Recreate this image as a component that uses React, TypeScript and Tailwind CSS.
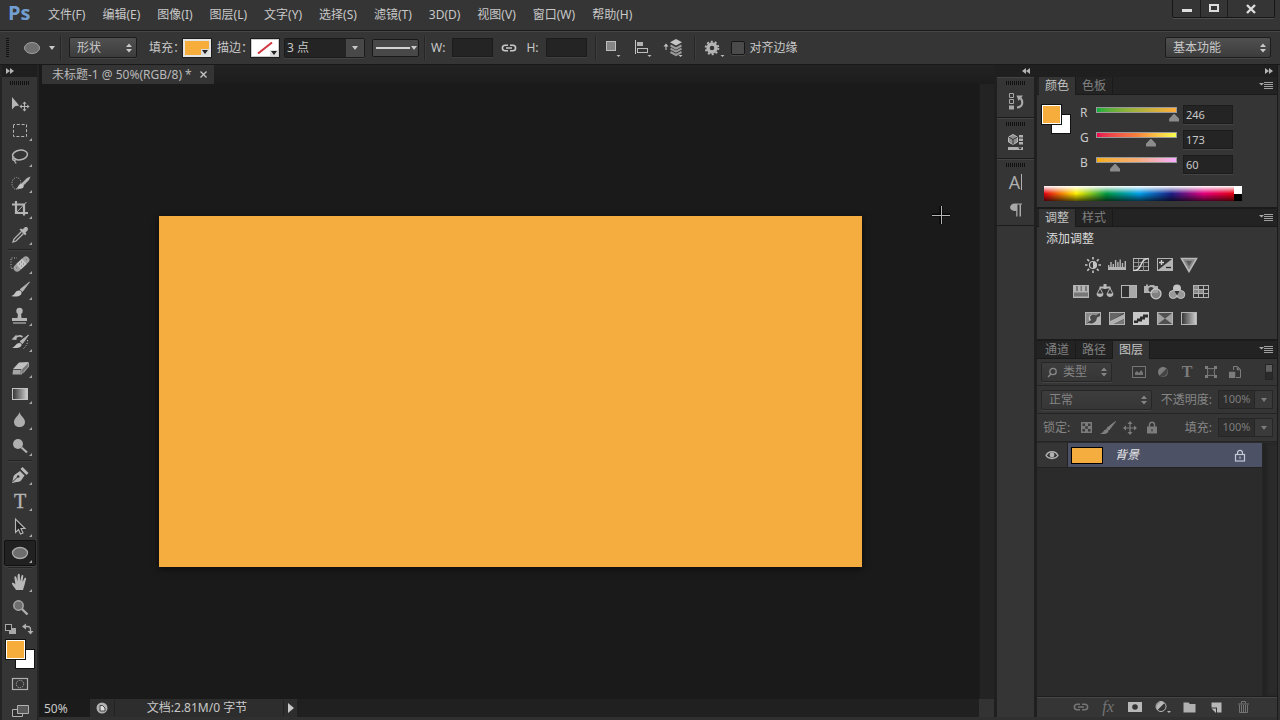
import React from "react";

type Kids = { children: React.ReactNode };

const menus = ["文件(F)", "编辑(E)", "图像(I)", "图层(L)", "文字(Y)", "选择(S)", "滤镜(T)", "3D(D)", "视图(V)", "窗口(W)", "帮助(H)"];

/* ---------- small shared pieces ---------- */

function Glyph({ w = 18, h = 18, children }: Kids & { w?: number; h?: number }) {
  return (
    <svg width={w} height={h} viewBox={`0 0 ${w} ${h}`} fill="none" aria-hidden="true" className="block shrink-0">
      {children}
    </svg>
  );
}

function UpDown() {
  return (
    <svg width="6" height="10" viewBox="0 0 6 10" aria-hidden="true" className="pointer-events-none absolute right-1 top-1/2 -translate-y-1/2">
      <path d="M0 4 3 0.5 6 4zM0 6 3 9.5 6 6z" fill="currentColor" />
    </svg>
  );
}

function DownTri() {
  return (
    <svg width="6" height="4" viewBox="0 0 6 4" aria-hidden="true">
      <path d="M0 0h6L3 4z" fill="currentColor" />
    </svg>
  );
}

function Select({ label, value, box, field }: { label: string; value: string; box: string; field: string }) {
  return (
    <div className={`relative rounded-[2px] border border-[#1c1c1c] bg-linear-to-b shadow-[0_1px_0_#454545] ${box}`}>
      <select aria-label={label} className={`h-full w-full appearance-none bg-transparent outline-none ${field}`}>
        <option>{value}</option>
      </select>
      <UpDown />
    </div>
  );
}

function Grip() {
  return <div className="h-1 w-5 bg-[repeating-linear-gradient(90deg,#111_0_1px,transparent_1px_2px)]" />;
}

function Double({ left = false }: { left?: boolean }) {
  return (
    <svg width="8" height="6" viewBox="0 0 8 6" aria-hidden="true" fill="#b4b4b4">
      {left ? <path d="M4 0v6L0 3zM8 0v6L4 3z" /> : <path d="M0 0v6l4-3zM4 0v6l4-3z" />}
    </svg>
  );
}

function Separator() {
  return <div className="h-6 w-px bg-[#262626] shadow-[1px_0_0_#3d3d3d]" />;
}

function LinkShape() {
  return (
    <Glyph w={16} h={10}>
      <path d="M7 2.2H4.2a2.8 2.8 0 0 0 0 5.6H7M9 2.2h2.8a2.8 2.8 0 0 1 0 5.6H9M5 5h6" stroke="currentColor" strokeWidth="1.6" />
    </Glyph>
  );
}

/* ---------- tool box ---------- */

function Tool({ name, more = true, active = false, children }: Kids & { name: string; more?: boolean; active?: boolean }) {
  return (
    <button
      type="button"
      aria-label={name}
      aria-pressed={active}
      className={active ? "h-[26px] w-8 rounded-[2px] border border-[#111] bg-[#212121] shadow-[0_1px_0_#444]" : "h-[26px] w-8 border border-transparent"}
    >
      <svg width="30" height="24" viewBox="3 1 30 24" fill="none" aria-hidden="true" className="block">
        {children}
        {more && <path d="M30 20v3h-3z" fill="#a8a8a8" />}
      </svg>
    </button>
  );
}

function ToolRule() {
  return <div className="my-px h-px w-6 bg-[#232323] shadow-[0_1px_0_#3e3e3e]" />;
}

function ToolBox() {
  return (
    <nav aria-label="工具" className="flex w-[39px] shrink-0 flex-col border-x-2 border-[#242424] bg-[#353535]">
      <div className="flex h-3 items-center bg-[#1f1f1f] pl-1">
        <Double />
      </div>
      <div className="flex h-[15px] justify-center pt-1">
        <Grip />
      </div>
      <div className="flex flex-col items-center">
        <Tool name="移动工具" more={false}>
          <path d="M10 5v12.500l3-3.300 4.200-.7z" fill="#b5b5b5" />
          <path d="M22.500 10v9M18 14.500h9" stroke="#b5b5b5" strokeWidth="1.200" />
          <path d="m22.500 9.400 2 2.400h-4zM22.500 19.600l2-2.400h-4zM17.400 14.500l2.400-2v4zM27.600 14.500l-2.400-2v4z" fill="#b5b5b5" />
        </Tool>
        <Tool name="矩形选框工具">
          <rect x="11.500" y="6.500" width="13" height="12" stroke="#b5b5b5" strokeDasharray="3 1.800" strokeDashoffset="1.500" />
        </Tool>
        <Tool name="套索工具">
          <ellipse cx="18" cy="11" rx="7.500" ry="4.800" stroke="#b5b5b5" strokeWidth="1.500" transform="rotate(-8 18 11)" />
          <path d="M12.500 13c-2.200.5-2.600 3-.6 3.400 1.500.2 2.200-1 1.600-2.100M12.500 16c0 1.800.4 2.600 1.800 3.300" stroke="#b5b5b5" strokeWidth="1.300" />
        </Tool>
        <Tool name="快速选择工具">
          <ellipse cx="14.500" cy="13.500" rx="4.500" ry="6" stroke="#b5b5b5" strokeDasharray="1 1.400" />
          <path d="m28.500 6.500-1.500 3.500-5.500 5.500-2-2 5.500-5.500z" fill="#b5b5b5" />
          <path d="M21.500 15c1 3-1.500 4.500-8 3.500 2-.5 2.500-2 3.500-3.500s3.500-2 4.500 0z" fill="#c4c4c4" />
        </Tool>
        <Tool name="裁剪工具">
          <path d="M10 8.500h12v11M14 5v12h12" stroke="#b5b5b5" strokeWidth="2.200" />
          <path d="m14 17 10.500-11" stroke="#b5b5b5" />
        </Tool>
        <Tool name="吸管工具">
          <path d="m19.500 9.500-7.500 7.500-1 3 3-1 7.500-7.500" stroke="#b5b5b5" strokeWidth="1.300" />
          <path d="m17.500 7.500 1.500-1 1.500 1 2-2c2.500-1.500 4.500 1 3 3l-2 2 1 1.500-1.500 1.300z" fill="#b5b5b5" />
        </Tool>
        <ToolRule />
        <Tool name="污点修复画笔工具">
          <path d="M13 17.500H9V7h6" stroke="#b5b5b5" strokeDasharray="1 1.500" />
          <rect x="10" y="9.500" width="19" height="7" rx="3.500" fill="#a2a2a2" transform="rotate(-43 19.500 13)" />
          <rect x="15.700" y="9.500" width="7.600" height="7" fill="#c6c6c6" transform="rotate(-43 19.500 13)" />
          <path d="M17 13h1M19 11h1M19 15h1M21 13h1M14 17h1M24 8.500h1" stroke="#6a6a6a" />
        </Tool>
        <Tool name="画笔工具">
          <path d="M27.500 5 20.500 14.500l-2.500-2z" fill="#b5b5b5" stroke="#b5b5b5" strokeWidth=".8" />
          <path d="M19.500 15c.5 3.800-3.500 5.500-10.500 4 2.500-.6 3.200-1.800 4.200-3.200 1.500-2.500 4.800-3 6.300-.8z" fill="#c4c4c4" />
        </Tool>
        <Tool name="仿制图章工具">
          <circle cx="17.500" cy="8" r="3.200" fill="#b5b5b5" />
          <path d="M16 10h3l.5 5H25v3H10v-3h5.500z" fill="#b5b5b5" />
          <path d="M11 20h13" stroke="#b5b5b5" strokeWidth="1.200" />
        </Tool>
        <Tool name="历史记录画笔工具">
          <path d="M26.500 6 20.500 14.500l-2.500-2z" fill="#b5b5b5" stroke="#b5b5b5" />
          <path d="M19.500 15c.5 3.200-3.500 4.700-9.500 3.700 2-.6 2.700-1.600 3.700-2.800 1.500-2 4.300-2.900 5.800-.9z" fill="#c4c4c4" />
          <path d="M12.500 9.500c3-3 6-3 8-1.500" stroke="#b5b5b5" strokeWidth="1.800" />
          <path d="M9.500 10.500 14.500 5.500v5.500z" fill="#b5b5b5" />
          <path d="M25.500 11c0 3.500-1 6-4 8.500" stroke="#b5b5b5" strokeDasharray="1.200 1.600" />
        </Tool>
        <Tool name="橡皮擦工具">
          <path d="m17 7.500 9.500-.5-5 7H11z" fill="#c0c0c0" />
          <path d="M26.500 7.500v4l-5 7v-4z" fill="#8a8a8a" />
          <path d="M11 14.800h7.500v4.700h-8z" fill="#a6a6a6" />
          <path d="m19 14.800 7.500-7v4l-7.500 7.700z" fill="#777" stroke="#bcbcbc" strokeWidth=".7" />
        </Tool>
        <Tool name="渐变工具">
          <defs>
            <linearGradient id="toolFade">
              <stop stopColor="#333" />
              <stop offset="1" stopColor="#d0d0d0" />
            </linearGradient>
          </defs>
          <rect x="10.500" y="7.500" width="15" height="11" fill="url(#toolFade)" stroke="#c4c4c4" />
        </Tool>
        <Tool name="模糊工具">
          <path d="M17.500 5c.5 3.500 5.500 6 5.500 10 0 3-2.300 5-5.500 5S12 18 12 15c0-4 5-6.500 5.500-10z" fill="#adadad" />
        </Tool>
        <Tool name="减淡工具">
          <circle cx="16" cy="11" r="5" fill="#b0b0b0" />
          <path d="m19.500 14.500 5.500 5" stroke="#b0b0b0" strokeWidth="2.200" />
        </Tool>
        <ToolRule />
        <Tool name="钢笔工具">
          <path d="M10 20.500c1.500-3 .5-6 3-8l5-3.500 4.500 4.500-3.200 4.700c-2 2.300-5 1.300-8.300 2.800z" fill="#b8b8b8" />
          <path d="m10.500 20 5.500-5.500" stroke="#333" />
          <circle cx="16.200" cy="14.500" r="1.300" fill="#333" />
          <path d="m19.500 6 6 6" stroke="#b8b8b8" strokeWidth="3" />
        </Tool>
        <Tool name="横排文字工具">
          <text x="18" y="19.500" textAnchor="middle" fontSize="20" className="fill-[#b5b5b5] font-['Liberation_Serif',serif]" stroke="#b5b5b5" strokeWidth=".4">T</text>
        </Tool>
        <Tool name="路径选择工具">
          <path d="M13.500 5v13.500l3-3 2 4.500 2.500-1-2-4.500h4z" fill="#242424" stroke="#b8b8b8" strokeWidth="1.100" />
        </Tool>
        <Tool name="椭圆工具" active>
          <ellipse cx="18" cy="13" rx="7.500" ry="5.500" fill="#6d6d6d" stroke="#a8a8a8" strokeWidth="1.300" />
        </Tool>
        <ToolRule />
        <Tool name="抓手工具">
          <path d="M14 21c-.6-2-3.800-4.600-4.200-6.800 1.200-1.200 2.700 0 3.600 1.300L12.300 8c.5-1.200 1.800-.9 2.100.2l1 4.300.3-6.800c.5-1.200 1.900-1 2.100 0l.3 6.700 1.300-5.700c.7-1 1.900-.6 1.900.4l-.8 5.800 1.900-3.700c.9-.8 2-.1 1.700.9-1 3.200-1.400 6.300-2.300 8.200L21 21z" fill="#b8b8b8" />
        </Tool>
        <Tool name="缩放工具" more={false}>
          <circle cx="16.500" cy="10.500" r="4.700" fill="#6f6f6f" stroke="#a8a8a8" strokeWidth="1.500" />
          <path d="m20 14 5.500 5.500" stroke="#adadad" strokeWidth="2.400" />
        </Tool>
      </div>
      <div className="flex h-[15px] items-center justify-between pl-[3px] pr-[3px]">
        <button type="button" aria-label="默认前景色和背景色">
          <Glyph w={12} h={12}>
            <path d="M6 5h5v6H4V8" fill="#a8a8a8" />
            <rect x=".5" y="1.500" width="6" height="6" fill="#2a2a2a" stroke="#a8a8a8" />
          </Glyph>
        </button>
        <button type="button" aria-label="切换前景色和背景色">
          <Glyph w={12} h={12}>
            <path d="M3 3.500h2.500c2 0 3 1 3 3V9" stroke="#b0b0b0" strokeWidth="1.300" />
            <path d="M4 .5v6l-4-3zM5.500 8h6l-3 3.500z" fill="#b0b0b0" />
          </Glyph>
        </button>
      </div>
      <div className="pl-1 pt-1">
        <Swatches />
      </div>
      <div className="flex flex-1 flex-col items-center justify-between pb-[2px] pt-[8px]">
        <button type="button" aria-label="以快速蒙版模式编辑">
          <Glyph w={18} h={14}>
            <rect x="1.500" y="1.500" width="15" height="11" stroke="#b0b0b0" strokeWidth="1.200" />
            <circle cx="9" cy="7" r="3.700" stroke="#b0b0b0" strokeDasharray="1.300 1" />
          </Glyph>
        </button>
        <button type="button" aria-label="更改屏幕模式">
          <Glyph w={18} h={14}>
            <path d="M1.500 5.500h10v7h-10z" stroke="#b0b0b0" fill="#303030" />
            <path d="M6.500 1.500h11v8h-11z" stroke="#b0b0b0" fill="#585858" />
          </Glyph>
        </button>
      </div>
    </nav>
  );
}

function Swatches() {
  return (
    <div className="relative h-[29px] w-[29px]">
      <button type="button" aria-label="背景色" className="absolute bottom-0 right-0 h-5 w-5 border border-[#111] bg-white" />
      <button type="button" aria-label="前景色" className="absolute left-0 top-0 h-[19px] w-[19px] border border-white bg-[#f6ad3c] outline outline-[#111]" />
    </div>
  );
}

/* ---------- top bars ---------- */

function MenuBar() {
  return (
    <header className="flex h-[30px] shrink-0 items-start bg-[#353535]">
      <div className="flex h-full w-10 items-center pl-2 pb-1 font-['Open_Sans',sans-serif] text-xl font-bold leading-none text-[#729fd0]">Ps</div>
      <nav aria-label="主菜单" className="flex h-full items-center gap-[17px]">
        {menus.map((m) => (
          <button type="button" key={m} className="whitespace-nowrap first:ml-2">{m}</button>
        ))}
      </nav>
      <div className="ml-auto mr-[5px] flex h-[18px] rounded-b-[2px] border border-t-0 border-[#161616] text-[#ddd] shadow-[0_1px_0_#4a4f49]">
        <button type="button" aria-label="最小化" className="flex w-7 items-center justify-center border-r border-[#1b1b1b]">
          <span className="mt-1 h-[3px] w-[10px] bg-current" />
        </button>
        <button type="button" aria-label="最大化" className="flex w-[27px] items-center justify-center border-r border-[#1b1b1b]">
          <span className="mb-px h-2 w-[10px] border-2 border-current" />
        </button>
        <button type="button" aria-label="关闭" className="flex w-[46px] items-center justify-center">
          <Glyph w={10} h={10}>
            <path d="m1 1 8 8M9 1 1 9" stroke="currentColor" strokeWidth="2.400" />
          </Glyph>
        </button>
      </div>
    </header>
  );
}

function OptionsBar() {
  return (
    <div className="flex h-[35px] shrink-0 items-center border-y border-[#191919] bg-[#353535] pl-[6px] pr-[9px] shadow-[inset_0_1px_0_#464646] [&_label]:whitespace-nowrap">
      <div className="h-5 w-[3px] bg-[repeating-linear-gradient(180deg,#111_0_1px,transparent_1px_2px)]" />
      <button type="button" aria-label="工具预设" className="ml-[14px] flex items-center gap-2">
        <Glyph w={18} h={14}>
          <ellipse cx="9" cy="7" rx="7.500" ry="5.500" fill="#707070" stroke="#a0a0a0" />
        </Glyph>
        <DownTri />
      </button>
      <div className="ml-[5px] mr-2">
        <Separator />
      </div>
      <Select label="工具模式" value="形状" box="h-[21px] w-[68px] from-[#505050] to-[#3c3c3c]" field="pl-[7px]" />
      <span className="ml-3">填充：</span>
      <button type="button" aria-label="填充颜色" className="-ml-[2px] flex h-[18px] w-7 items-end justify-end border-2 border-[#e4e4e4] bg-[#f6ad3c] outline outline-[#1d1d1d]">
        <span className="bg-[#ddd] p-px text-[#222]"><DownTri /></span>
      </button>
      <span className="ml-[6px]">描边：</span>
      <button type="button" aria-label="描边颜色" className="relative -ml-[2px] flex h-[18px] w-7 items-end justify-end border border-[#ccc] bg-white outline outline-[#1d1d1d]">
        <svg width="16" height="12" viewBox="0 0 16 12" aria-hidden="true" className="absolute left-[5px] top-[2px]">
          <path d="M1 11.500 15 .5" stroke="#d23540" strokeWidth="2" />
        </svg>
        <span className="relative bg-[#ddd] p-px text-[#222]"><DownTri /></span>
      </button>
      <div className="ml-[5px] flex h-5 rounded-[2px] border border-[#1b1b1b] bg-[#242424] shadow-[0_1px_0_#434343]">
        <input aria-label="描边宽度" defaultValue="3 点" className="w-[61px] bg-transparent pl-[2px] outline-none" />
        <button type="button" aria-label="描边宽度选项" className="flex w-[18px] items-center justify-center bg-[#484848]"><DownTri /></button>
      </div>
      <button type="button" aria-label="描边类型" className="ml-[7px] flex h-[18px] w-[47px] items-center justify-between rounded-[2px] border border-[#191919] bg-[#484848] pl-[3px] pr-px">
        <span className="h-[2px] w-[34px] bg-[#d2d2d2]" />
        <DownTri />
      </button>
      <div className="ml-[5px] mr-[6px]"><Separator /></div>
      <label htmlFor="shape-w">W:</label>
      <input id="shape-w" className="ml-[7px] h-[19px] w-[41px] border border-[#1c1c1c] bg-[#242424] shadow-[0_1px_0_#404040] outline-none" />
      <button type="button" aria-label="链接形状的宽度和高度" className="mx-2"><LinkShape /></button>
      <label htmlFor="shape-h" className="ml-px">H:</label>
      <input id="shape-h" className="ml-[7px] h-[19px] w-[41px] border border-[#1c1c1c] bg-[#242424] shadow-[0_1px_0_#404040] outline-none" />
      <div className="ml-2 mr-[9px]"><Separator /></div>
      <button type="button" aria-label="路径操作">
        <Glyph w={20} h={20}>
          <rect x="1.500" y="3.500" width="9" height="9" fill="#858585" stroke="#bdbdbd" />
          <path d="M11.500 17h4l-2 2z" fill="#bbb" />
        </Glyph>
      </button>
      <button type="button" aria-label="路径对齐方式" className="ml-[9px]">
        <Glyph w={20} h={20}>
          <path d="M1.500 2v14" stroke="#c4c4c4" />
          <rect x="3" y="4" width="6" height="4" fill="#b0b0b0" />
          <rect x="3.500" y="10.500" width="10" height="4" stroke="#bdbdbd" />
          <path d="M13.500 17h4l-2 2z" fill="#bbb" />
        </Glyph>
      </button>
      <button type="button" aria-label="路径排列方式" className="ml-[9px]">
        <Glyph w={20} h={20}>
          <path d="m13 1 6 3.200-6 3.200-6-3.200z" fill="#c4c4c4" />
          <path d="m7.500 7.500 5.500 3 5.500-3M7.500 10.700l5.500 3 5.500-3M7.500 14l5.500 3 5.500-3" stroke="#999" strokeWidth="2" />
          <path d="M3 12V7" stroke="#c4c4c4" />
          <path d="m.5 8.500 2.500-3 2.500 3zM15.500 17h4l-2 2z" fill="#c4c4c4" />
        </Glyph>
      </button>
      <div className="ml-[11px] mr-[9px]"><Separator /></div>
      <button type="button" aria-label="几何选项">
        <Glyph w={22} h={20}>
          <circle cx="8" cy="10" r="4" stroke="#b4b4b4" strokeWidth="3.400" />
          <circle cx="8" cy="10" r="6.300" stroke="#b4b4b4" strokeWidth="2" strokeDasharray="2 1.958" />
          <path d="M16.500 17h4l-2 2z" fill="#bbb" />
        </Glyph>
      </button>
      <input id="align-edges" type="checkbox" className="ml-[5px] h-[14px] w-[14px] appearance-none rounded-[2px] border border-[#171717] bg-[#4b4b4b] shadow-[0_1px_0_#484848]" />
      <label htmlFor="align-edges" className="ml-[5px]">对齐边缘</label>
      <div className="ml-auto">
        <Select label="工作区" value="基本功能" box="h-[21px] w-[106px] from-[#505050] to-[#3c3c3c]" field="pl-[7px]" />
      </div>
    </div>
  );
}

/* ---------- document ---------- */

function DocumentWindow() {
  return (
    <main className="flex min-w-0 flex-1 flex-col bg-[#1a1a1a] pl-[3px]">
      <div role="tablist" className="flex h-[19px] shrink-0 bg-linear-to-b from-[#232323] to-[#1c1c1c]">
        <div role="tab" aria-selected="true" className="flex items-center gap-2 bg-[#343434] pl-[10px] pr-[7px] text-[#b9b9b9]">
          <span className="whitespace-pre">未标题-1 @ 50%(RGB/8) *</span>
          <button type="button" aria-label="关闭文档">
            <Glyph w={7} h={7}>
              <path d="m.5.5 6 6M6.500.5l-6 6" stroke="#c8c8c8" strokeWidth="1.300" />
            </Glyph>
          </button>
        </div>
      </div>
      <div className="flex min-h-0 flex-1">
        <div className="relative flex flex-1 items-center justify-center bg-[#1a1a1a]">
          <div className="h-[57%] w-3/4 bg-[#f6ad3f] shadow-[0_2px_6px_#0c0c0c]" />
          <svg width="18" height="18" viewBox="0 0 18 18" aria-hidden="true" className="absolute right-[29px] top-[122px]">
            <path d="M9 0v18M0 9h18" stroke="#050505" strokeWidth="3" />
            <path d="M9.500 0v18M0 9.500h18" stroke="#b5b5b5" />
          </svg>
        </div>
        <div className="w-[15px] border-l border-[#1d1d1d] bg-[#232323]" />
      </div>
      <footer className="flex h-[18px] shrink-0 items-center bg-[#202020]">
        <input aria-label="缩放比例" defaultValue="50%" className="h-full w-12 bg-[#1b1b1b] pl-[2px] outline-none" />
        <div className="flex h-full items-center bg-[#2d2d2d]">
          <button type="button" aria-label="文档状态" className="flex w-6 justify-center">
            <Glyph w={12} h={12}>
              <circle cx="6" cy="6" r="5.500" fill="#b0b0b0" />
              <path d="M4 3.500h2.500l2.500 2.500v3H4z" fill="#ddd" stroke="#444" />
            </Glyph>
          </button>
          <span className="w-[170px] border-x border-[#222] pr-1 text-center">文档:2.81M/0 字节</span>
          <button type="button" aria-label="状态栏选项" className="flex w-[13px] justify-center">
            <Glyph w={6} h={10}>
              <path d="M0 0v10l6-5z" fill="#c8c8c8" />
            </Glyph>
          </button>
        </div>
        <div className="ml-auto h-full w-[15px] bg-[#333]" />
      </footer>
    </main>
  );
}

/* ---------- collapsed icon dock ---------- */

function DockGroup({ children }: Kids) {
  return (
    <div className="flex flex-col items-center border-b border-[#1b1b1b] pt-1 shadow-[inset_0_1px_0_#444]">
      <Grip />
      {children}
    </div>
  );
}

function IconDock() {
  return (
    <aside aria-label="折叠面板" className="flex w-[43px] shrink-0 flex-col border-x-[3px] border-[#1f1f1f] bg-[#353535]">
      <div className="flex h-3 items-center justify-end bg-[#1f1f1f] pr-1"><Double left /></div>
      <DockGroup>
        <button type="button" aria-label="历史记录" className="flex h-8 items-center pb-px">
          <Glyph w={18} h={18}>
            <path d="M2.500 1.500h4v4h-4zM2.500 7.500h4v4h-4z" stroke="#a8a8a8" />
            <path d="M2 13.500h5v4H2z" fill="#a8a8a8" />
            <path d="M10 15.500c6-.5 6.500-6 3.500-9.500" stroke="#a8a8a8" strokeWidth="2" />
            <path d="M9.500 3.500h6.500l-4.500 5.500z" fill="#a8a8a8" />
          </Glyph>
        </button>
      </DockGroup>
      <DockGroup>
        <button type="button" aria-label="属性" className="flex h-8 items-center pb-px">
          <Glyph w={18} h={18}>
            <path d="M6 1.500 10.500 4v5L6 11.500 1.500 9V4z" fill="#8f8f8f" stroke="#bbb" />
            <path d="M1.500 4 6 6.500 10.500 4M6 6.500v5" stroke="#333" />
            <path d="M12 2h4v2.500h-4zM12 5.500h4V8h-4zM12 9h4v2.500h-4zM1 14h15v3H1z" fill="#b0b0b0" />
            <path d="M11 14.500h4l-2 2z" fill="#222" />
          </Glyph>
        </button>
      </DockGroup>
      <DockGroup>
        <button type="button" aria-label="字符" className="flex h-7 items-center pt-px text-lg leading-none text-[#b0b0b0]">
          <span className="font-['Open_Sans',sans-serif] font-medium">A</span>
          <span className="ml-px h-4 w-px bg-[#b0b0b0]" />
        </button>
        <button type="button" aria-label="段落" className="flex h-[30px] items-center">
          <Glyph w={14} h={14}>
            <path d="M13 .5H6C-.5.500-.5 8 5.500 8h1.700v5.500h1.300V1.500h2v12H12v-12h1z" fill="#a8a8a8" />
          </Glyph>
        </button>
      </DockGroup>
    </aside>
  );
}

/* ---------- panels ---------- */

function PanelTabs({ names, active }: { names: string[]; active: string }) {
  return (
    <div role="tablist" className="flex h-[18px] items-stretch border-b border-[#1a1a1a] bg-[#232323] pl-[2px]">
      {names.map((n) => (
        <button
          type="button"
          role="tab"
          key={n}
          aria-selected={n === active}
          className={n === active ? "-mb-px border-r border-[#1a1a1a] bg-[#353535] px-[6px] leading-4 text-[#c4c4c4]" : "border-r border-[#1a1a1a] px-[6px] leading-4 text-[#808080]"}
        >
          {n}
        </button>
      ))}
      <button type="button" aria-label="面板菜单" className="ml-auto mr-1 flex items-center">
        <Glyph w={14} h={9}>
          <path d="M0 2h5L2.500 4.500z" fill="#aaa" />
          <path d="M5 1.500h9M5 3.500h9M5 5.500h9M5 7.500h9" stroke="#a0a0a0" />
        </Glyph>
      </button>
    </div>
  );
}

const channels = [
  { name: "R", value: 246, track: "h-[6px] border border-[#999] bg-linear-to-r from-[#00ad3c] to-[#ffad3c]" },
  { name: "G", value: 173, track: "h-[6px] border border-[#999] bg-linear-to-r from-[#e8004f] via-[#f6803c] to-[#f6ff50]" },
  { name: "B", value: 60, track: "h-[6px] border border-[#999] bg-linear-to-r from-[#f6ad10] via-[#f6ad70] to-[#f6adff]" },
];

function ColorPanel() {
  return (
    <section aria-label="颜色" className="border-b-2 border-[#1b1b1b]">
      <PanelTabs names={["颜色", "色板"]} active="颜色" />
      <div className="flex h-[91px] pl-[5px] pt-[10px]">
        <Swatches />
        <div className="ml-[9px] flex flex-col">
          {channels.map((c) => (
            <div key={c.name} className="flex h-[25px] items-start">
              <label htmlFor={`ch-${c.name}`} className="w-4 leading-4">{c.name}</label>
              <div className="w-[81px] pt-[2px]">
                <div className={c.track} />
                <input
                  type="range"
                  min={0}
                  max={255}
                  defaultValue={c.value}
                  aria-label={`${c.name} 滑块`}
                  className="-ml-[5px] block h-[9px] w-[91px] appearance-none bg-transparent [&::-webkit-slider-thumb]:h-2 [&::-webkit-slider-thumb]:w-[10px] [&::-webkit-slider-thumb]:appearance-none [&::-webkit-slider-thumb]:bg-[#8c8c8c] [&::-webkit-slider-thumb]:[clip-path:polygon(50%_0,100%_65%,100%_100%,0_100%,0_65%)]"
                />
              </div>
              <input id={`ch-${c.name}`} defaultValue={c.value} className="ml-[6px] h-[19px] w-[50px] border border-[#1c1c1c] bg-[#242424] pl-[2px] text-[11px] shadow-[0_1px_0_#444] outline-none" />
            </div>
          ))}
        </div>
      </div>
      <div className="flex h-[21px] pl-[7px] pb-[6px]">
        <button
          type="button"
          aria-label="色谱"
          className="w-[190px] bg-[linear-gradient(180deg,#fff_0%,#fff0_50%,#0000_50%,#000a_100%),linear-gradient(90deg,#e60012,#fff000_17%,#009944_33%,#00a0e9_50%,#1d2088_67%,#e4007f_84%,#e60012)]"
        />
        <span className="flex w-2 flex-col"><span className="flex-1 bg-white" /><span className="flex-1 bg-black" /></span>
      </div>
    </section>
  );
}

function Adj({ name, children }: Kids & { name: string }) {
  return (
    <button type="button" aria-label={name} className="flex w-6 justify-center">
      <Glyph w={18} h={16}>{children}</Glyph>
    </button>
  );
}

const frame = <rect x="1.500" y="1.500" width="15" height="12" stroke="#b4b4b4" />;

function AdjustPanel() {
  return (
    <section aria-label="调整" className="border-b-2 border-[#1b1b1b]">
      <PanelTabs names={["调整", "样式"]} active="调整" />
      <div className="flex h-[112px] flex-col pt-1">
        <h2 className="pl-[9px] leading-4 text-[#dcdcdc]">添加调整</h2>
        <div className="mt-[10px] flex flex-col gap-[11px] pr-8">
          <div className="flex justify-center">
            <Adj name="亮度/对比度">
              <circle cx="9" cy="8" r="3.500" stroke="#c4c4c4" strokeWidth="1.200" />
              <path d="M9 4.500a3.500 3.500 0 0 1 0 7z" fill="#c4c4c4" />
              <path d="M9 0v2.500M9 13.500V16M1 8h2.500M14.500 8H17M3.300 2.300 5.100 4.100M12.900 11.900l1.800 1.800M3.300 13.700l1.800-1.800M12.900 4.100l1.800-1.800" stroke="#c4c4c4" strokeWidth="1.600" />
            </Adj>
            <Adj name="色阶">
              <path d="M0 10h18v3H0z" fill="#b4b4b4" />
              <path d="M.7 11V8M3 11V5M5.300 11V7M7.600 11V3M9.900 11V5M12.200 11V2.500M14.500 11V6M17.300 11V4" stroke="#b4b4b4" strokeWidth="1.400" />
            </Adj>
            <Adj name="曲线">
              {frame}
              <path d="M6.500 2v12M11.500 2v12M2 5.500h14M2 9.500h14" stroke="#8c8c8c" />
              <path d="M1.500 13.500C11 13.500 7 2 16.500 1.500" stroke="#d8d8d8" strokeWidth="1.400" />
            </Adj>
            <Adj name="曝光度">
              {frame}
              <path d="M16 2v11H2z" fill="#b4b4b4" />
              <path d="M3 5.500h5M5.500 3v5" stroke="#d0d0d0" strokeWidth="1.300" />
              <path d="M10 10.500h5" stroke="#222" strokeWidth="1.300" />
            </Adj>
            <Adj name="自然饱和度">
              <path d="M1.500 1.500h15L9 14.500z" fill="#858585" stroke="#b8b8b8" strokeWidth="1.600" />
              <path d="M6 4h6l-3 5z" fill="#5c5c5c" />
            </Adj>
          </div>
          <div className="flex justify-center">
            <Adj name="色相/饱和度">
              <rect x="1" y="1" width="16" height="13" fill="#b4b4b4" />
              <path d="M4 2h2v5H4zM8.500 2h1.500v5H8.500zM13 2h2v5h-2z" fill="#7a7a7a" />
              <rect x="2" y="8.500" width="14" height="4" fill="#777" />
            </Adj>
            <Adj name="色彩平衡">
              <path d="M3.500 3.500h11M9 1v4" stroke="#b8b8b8" strokeWidth="1.800" />
              <path d="M7.500 0h3v5h-3z" fill="#b8b8b8" />
              <path d="m4 4-3 6h6zM14 4l-3 6h6z" stroke="#b8b8b8" />
              <path d="M.5 10h7c-.5 4-6.500 4-7 0zM10.500 10h7c-.5 4-6.500 4-7 0z" fill="#b8b8b8" />
            </Adj>
            <Adj name="黑白">
              {frame}
              <path d="M2 2h7v11H2z" fill="#303030" />
              <path d="M9 2h7v11H9z" fill="#a8a8a8" />
            </Adj>
            <Adj name="照片滤镜">
              <path d="M0 2h2V.500h2V2h1l1-1h4l1 1h3v7H0z" fill="#b0b0b0" />
              <circle cx="7" cy="5.500" r="2.500" fill="#3c3c3c" />
              <circle cx="12" cy="9.800" r="5" fill="#9a9a9a" fillOpacity=".75" stroke="#c8c8c8" strokeWidth="1.300" />
            </Adj>
            <Adj name="通道混合器">
              <circle cx="9" cy="4.500" r="4" fill="#c4c4c4" />
              <circle cx="5.200" cy="10.500" r="4" fill="#989898" stroke="#c4c4c4" />
              <circle cx="12.800" cy="10.500" r="4" fill="#989898" stroke="#c4c4c4" />
              <path d="M6.500 7h5L9 11.500z" fill="#303030" />
            </Adj>
            <Adj name="颜色查找">
              {frame}
              <path d="M2 2h4v3H2zM2 6h4v3H2zM7 6h4v3H7z" fill="#888" />
              <path d="M6.500 2v12M11.500 2v12M2 5.500h14M2 9.500h14" stroke="#b4b4b4" />
            </Adj>
          </div>
          <div className="flex justify-center">
            <Adj name="反相">
              <rect x="1" y="1" width="16" height="13" fill="#b4b4b4" />
              <path d="M2 2h14L2 13z" fill="#8a8a8a" />
              <circle cx="9" cy="7.500" r="4.200" fill="#c8c8c8" />
              <path d="M2 13 7 9c-3-4 2-7 5-4.500L16 2v3l-3 1.500C12.500 13 6 13 5 12z" fill="#333" fillOpacity=".85" />
            </Adj>
            <Adj name="色调分离">
              {frame}
              <path d="M2 2h14L2 10z" fill="#666" />
              <path d="m2 10 14-7v5L6 13H2z" fill="#b0b0b0" />
              <path d="m6 13 10-5v5z" fill="#777" />
            </Adj>
            <Adj name="阈值">
              <rect x="1" y="1" width="16" height="13" fill="#c8c8c8" />
              <path d="M2 9.500h3v-2h3v-2h3v-2h5v3h-3v2h-3v2H6V12H2z" fill="#2c2c2c" />
            </Adj>
            <Adj name="可选颜色">
              {frame}
              <path d="m2 2 7 5.500L16 2zM2 13l7-5.500 7 5.500z" fill="#505050" />
              <path d="m2 2 7 5.500L2 13zM16 2 9 7.500l7 5.500z" fill="#a0a0a0" />
            </Adj>
            <Adj name="渐变映射">
              <rect x="1.500" y="1.500" width="15" height="12" fill="url(#toolFade)" stroke="#b4b4b4" />
            </Adj>
          </div>
        </div>
      </div>
    </section>
  );
}

function Percent({ label }: { label: string }) {
  return (
    <div className="flex h-[19px] border border-[#262626] bg-[#2e2e2e] text-[#7c7c7c]">
      <input aria-label={label} defaultValue="100%" className="w-[35px] bg-transparent text-center text-[11px] outline-none" />
      <button type="button" aria-label={`${label}选项`} className="flex w-[18px] items-center justify-center border-l border-[#262626] bg-[#3a3a3a]"><DownTri /></button>
    </div>
  );
}

function IconButton({ name, box, children }: Kids & { name: string; box: string }) {
  return (
    <button type="button" aria-label={name} className={`flex items-center justify-center ${box}`}>
      {children}
    </button>
  );
}

function LayersPanel() {
  return (
    <section aria-label="图层" className="flex min-h-0 flex-1 flex-col">
      <PanelTabs names={["通道", "路径", "图层"]} active="图层" />
      <div className="flex h-[27px] shrink-0 items-center border-b border-[#242424] pl-1 pr-1 pb-px text-[#858585]">
        <div className="relative">
          <Select label="滤镜类型" value="类型" box="h-5 w-[71px] border-[#262626] from-[#3d3d3d] to-[#363636]" field="pl-[21px]" />
          <svg width="11" height="11" viewBox="0 0 11 11" fill="none" aria-hidden="true" className="pointer-events-none absolute left-[6px] top-[5px]">
            <circle cx="6" cy="4.500" r="3.200" stroke="#888" strokeWidth="1.300" />
            <path d="M4 7 1 10" stroke="#888" strokeWidth="1.500" />
          </svg>
        </div>
        <div className="ml-[15px] flex">
          <IconButton name="像素图层滤镜" box="w-6">
            <Glyph w={14} h={12}>
              <rect x=".5" y=".5" width="13" height="11" stroke="#757575" />
              <path d="M3 9V6.500l2-1.500 2 2 2-3 2 2.500V9z" fill="#757575" />
            </Glyph>
          </IconButton>
          <IconButton name="调整图层滤镜" box="w-6">
            <Glyph w={12} h={12}>
              <circle cx="6" cy="6" r="5" fill="#7c7c7c" />
              <path d="M9.500 2.500a5 5 0 0 1-7 7z" fill="#444" />
            </Glyph>
          </IconButton>
          <IconButton name="文字图层滤镜" box="w-6">
            <span className="font-['Liberation_Serif',serif] text-base font-bold leading-none text-[#7c7c7c]">T</span>
          </IconButton>
          <IconButton name="形状图层滤镜" box="w-6">
            <Glyph w={12} h={12}>
              <path d="M2 2c2.500 1 5.500 1 8 0-1 2.500-1 5.500 0 8-2.500-1-5.500-1-8 0 1-2.500 1-5.500 0-8z" stroke="#7c7c7c" />
              <path d="M0 0h3v3H0zM9 0h3v3H9zM0 9h3v3H0zM9 9h3v3H9z" fill="#7c7c7c" />
            </Glyph>
          </IconButton>
          <IconButton name="智能对象滤镜" box="w-6">
            <Glyph w={12} h={12}>
              <path d="M4.500 4V.500h4l3 3v8H7" stroke="#7c7c7c" />
              <path d="M8 1v3h3M0 6h6v6H0z" fill="#7c7c7c" stroke="#7c7c7c" strokeWidth=".5" />
            </Glyph>
          </IconButton>
        </div>
        <button type="button" aria-label="图层滤镜开关" className="ml-auto h-4 w-2 border border-[#252525] bg-linear-to-b from-[#606060] from-45% to-[#2a2a2a] to-50%" />
      </div>
      <div className="flex h-7 shrink-0 items-center border-b border-[#242424] pl-1 pr-1 text-[#858585]">
        <Select label="混合模式" value="正常" box="h-5 w-[111px] border-[#262626] from-[#3d3d3d] to-[#363636]" field="pl-[7px]" />
        <span className="ml-auto mr-[6px] whitespace-nowrap">不透明度:</span>
        <Percent label="不透明度" />
      </div>
      <div className="flex h-7 shrink-0 items-center border-b border-[#242424] pl-[6px] pr-1 text-[#858585]">
        <span>锁定:</span>
        <div className="ml-[5px] flex">
          <IconButton name="锁定透明像素" box="w-[22px]">
            <Glyph w={11} h={11}>
              <rect width="11" height="11" fill="#7a7a7a" />
              <path d="M1.500 1.500H4V4H1.500zM7 1.500h2.500V4H7zM4.200 4.200h2.600v2.600H4.200zM1.500 7H4v2.500H1.500zM7 7h2.500v2.500H7z" fill="#3a3a3a" />
            </Glyph>
          </IconButton>
          <IconButton name="锁定图像像素" box="w-[22px]">
            <Glyph w={16} h={14}>
              <path d="M15.500.5 9 9 6.800 7.300z" fill="#808080" stroke="#808080" />
              <path d="M8.500 9c.3 3.500-3.500 4.700-8.500 3.700 2.200-.5 2.700-1.500 3.500-2.500C5.200 8 7.500 7 8.500 9z" fill="#808080" />
            </Glyph>
          </IconButton>
          <IconButton name="锁定位置" box="w-[22px]">
            <Glyph w={14} h={14}>
              <path d="M7 2v10M2 7h10" stroke="#7c7c7c" strokeWidth="1.200" />
              <path d="m7 0 2.500 3h-5zM7 14l2.500-3h-5zM0 7l3-2.500v5zM14 7l-3-2.500v5z" fill="#7c7c7c" />
            </Glyph>
          </IconButton>
          <IconButton name="锁定全部" box="w-[22px]">
            <Glyph w={10} h={13}>
              <path d="M2.500 6V3.500c0-3 5-3 5 0V6" stroke="#7c7c7c" strokeWidth="1.400" />
              <rect y="5.500" width="10" height="7" fill="#7c7c7c" />
              <path d="M4.500 8h1v2.500h-1z" fill="#333" />
            </Glyph>
          </IconButton>
        </div>
        <span className="ml-auto mr-[6px]">填充:</span>
        <Percent label="填充" />
      </div>
      <div className="flex min-h-0 flex-1 bg-[#2b2b2b] pt-px">
        <ul className="flex-1">
          <li className="flex h-[25px] items-center border-b border-[#222]">
            <button type="button" aria-label="图层可见性" className="flex h-full w-[31px] items-center justify-center border-r border-[#222] bg-[#353535]">
              <Glyph w={14} h={10}>
                <path d="M1 5.500C3.500.500 10.500.500 13 5.500 10.500 9.500 3.500 9.500 1 5.500z" stroke="#b4b4b4" strokeWidth="1.300" />
                <circle cx="7" cy="5" r="2.400" fill="#b4b4b4" />
              </Glyph>
            </button>
            <div className="flex h-full flex-1 items-center bg-[#4d5166] pl-[3px] pr-4">
              <span className="h-[17px] w-8 border border-black bg-[#f6ad3f]" />
              <span className="ml-3 text-[#e6e6e6] italic">背景</span>
              <span className="ml-auto">
                <Glyph w={12} h={13}>
                  <path d="M3.500 5.500V4c0-3.500 5-3.500 5 0v1.500" stroke="#c4c8d4" strokeWidth="1.200" />
                  <rect x="1.500" y="5.500" width="9" height="6.500" stroke="#c4c8d4" strokeWidth="1.200" />
                  <path d="M6 7.500v2.500" stroke="#c4c8d4" />
                </Glyph>
              </span>
            </div>
          </li>
        </ul>
        <div className="w-[15px] border-l border-[#252525] bg-[#2a2a2a] shadow-[inset_4px_0_3px_#232323]" />
      </div>
      <div className="flex h-[21px] shrink-0 items-center justify-center border-t border-[#1f1f1f] pr-[2px] pl-3 text-[#747474] shadow-[inset_0_1px_0_#454545]">
        <IconButton name="链接图层" box="w-[27px]"><LinkShape /></IconButton>
        <IconButton name="添加图层样式" box="w-[27px]">
          <span className="font-['Liberation_Serif',serif] text-base italic leading-none">fx</span>
        </IconButton>
        <IconButton name="添加图层蒙版" box="w-[27px]">
          <Glyph w={14} h={12}>
            <rect y="1" width="14" height="10" fill="#b8b8b8" />
            <circle cx="7" cy="6" r="2.800" fill="#333" />
          </Glyph>
        </IconButton>
        <IconButton name="创建新的填充或调整图层" box="w-[27px]">
          <Glyph w={18} h={12}>
            <circle cx="8" cy="5.500" r="5" fill="#333" stroke="#b8b8b8" />
            <path d="M11.500 2a5 5 0 0 0-7 7z" fill="#b8b8b8" />
            <path d="M14 10h4l-2 2z" fill="#b8b8b8" />
          </Glyph>
        </IconButton>
        <IconButton name="创建新组" box="w-[27px]">
          <Glyph w={13} h={11}>
            <path d="M.5.500h5L7 2h5.500v8.500H.5z" fill="#b0b0b0" />
          </Glyph>
        </IconButton>
        <IconButton name="创建新图层" box="w-[27px]">
          <Glyph w={11} h={11}>
            <path d="M.5.500h10v10H6V5.500H.5z" fill="#b8b8b8" />
            <path d="M.5 6.500H5V11z" fill="#b8b8b8" />
          </Glyph>
        </IconButton>
        <IconButton name="删除图层" box="w-[27px]">
          <Glyph w={11} h={12}>
            <path d="M0 3h11M3.500 2.500v-2h4v2M1.500 4v7.500h8V4M3.500 4v7M5.500 4v7M7.500 4v7" stroke="#747474" />
          </Glyph>
        </IconButton>
      </div>
    </section>
  );
}

export default function App() {
  return (
    <div className="flex h-screen flex-col overflow-hidden bg-[#303030] font-['Noto_Sans','Noto_Sans_CJK_SC',sans-serif] text-xs text-[#c8c8c8]">
      <MenuBar />
      <OptionsBar />
      <div className="flex min-h-0 flex-1">
        <ToolBox />
        <div className="flex min-w-0 flex-1 pb-[3px]">
          <DocumentWindow />
          <IconDock />
          <div className="flex w-[240px] shrink-0 flex-col bg-[#353535]">
            <div className="flex h-3 shrink-0 items-center justify-end bg-[#1f1f1f] pr-1"><Double /></div>
            <ColorPanel />
            <AdjustPanel />
            <LayersPanel />
          </div>
        </div>
        <div className="w-[3px] border-l border-[#1b1b1b]" />
      </div>
    </div>
  );
}
